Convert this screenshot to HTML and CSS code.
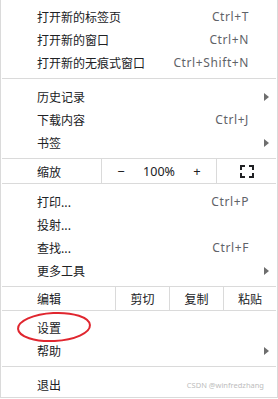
FILE: index.html
```html
<!DOCTYPE html>
<html lang="zh-CN">
<head>
  <meta charset="UTF-8">
  <title>菜单</title>
  <link rel="stylesheet" href="styles.css">
</head>
<body>

<div class="menu">
  <div class="item"><span class="label">打开新的标签页</span><span class="key">Ctrl+T</span></div>
  <div class="item"><span class="label">打开新的窗口</span><span class="key">Ctrl+N</span></div>
  <div class="item"><span class="label">打开新的无痕式窗口</span><span class="key">Ctrl+Shift+N</span></div>

  <div class="sep"></div>

  <div class="item"><span class="label">历史记录</span><span class="arrow"></span></div>
  <div class="item"><span class="label">下载内容</span><span class="key">Ctrl+J</span></div>
  <div class="item"><span class="label">书签</span><span class="arrow"></span></div>

  <div class="zoom">
    <div class="zoom-label">缩放</div>
    <div class="zoom-ctrl">
      <span>−</span>
      <span class="pct">100%</span>
      <span>+</span>
    </div>
    <div class="zoom-full">
      <svg width="14" height="13" viewBox="0 0 14 13">
        <path d="M1 5V1H5 M9 1H13V5 M13 8V12H9 M5 12H1V8" fill="none" stroke="#202124" stroke-width="2"/>
      </svg>
    </div>
  </div>

  <div class="item"><span class="label">打印...</span><span class="key">Ctrl+P</span></div>
  <div class="item"><span class="label">投射...</span></div>
  <div class="item"><span class="label">查找...</span><span class="key">Ctrl+F</span></div>
  <div class="item"><span class="label">更多工具</span><span class="arrow"></span></div>

  <div class="edit">
    <div class="edit-label">编辑</div>
    <div class="edit-btn">剪切</div>
    <div class="edit-btn">复制</div>
    <div class="edit-btn">粘贴</div>
  </div>

  <div class="item"><span class="label">设置</span></div>
  <div class="item"><span class="label">帮助</span><span class="arrow"></span></div>

  <div class="sep"></div>

  <div class="item"><span class="label">退出</span><span class="mark">CSDN @winfredzhang</span></div>

  <svg class="circle" width="78" height="34" viewBox="0 0 78 34">
    <ellipse cx="39" cy="17" rx="36" ry="14" fill="none" stroke="#e0262f" stroke-width="2" transform="rotate(-3 39 17)"/>
  </svg>
</div>

</body>
</html>
```

FILE: styles.css
```css
* {
  box-sizing: border-box;
}

body {
  margin: 0;
  background: #fff;
  font-family: "Noto Sans CJK SC", "Noto Sans", sans-serif;
  font-size: 12px;
  color: #202124;
}

.menu {
  position: relative;
  width: 278px;
  height: 398px;
  padding-top: 5px;
  border: 1px solid #dadada;
  border-top: none;
}

.item {
  display: flex;
  align-items: center;
  height: 23px;
  padding: 0 8px 0 36px;
}

.label {
  flex: 1;
}

.key {
  margin-right: 20px;
  color: #5f6368;
  font-family: "Noto Sans", sans-serif;
  letter-spacing: 0.6px;
}

.arrow {
  width: 0;
  height: 0;
  border-left: 5px solid #6e6e6e;
  border-top: 4px solid transparent;
  border-bottom: 4px solid transparent;
}

.sep {
  height: 1px;
  margin: 4px 1px 6px;
  background: #dadada;
}

.zoom {
  display: flex;
  height: 26px;
  margin: 4px 1px 6px;
  border-top: 1px solid #dadada;
  border-bottom: 1px solid #dadada;
}

.zoom-label {
  width: 100px;
  padding-left: 35px;
  border-right: 1px solid #dadada;
  display: flex;
  align-items: center;
}

.zoom-ctrl {
  width: 115px;
  display: grid;
  grid-template-columns: repeat(3, 1fr);
  align-items: center;
  justify-items: center;
  border-right: 1px solid #dadada;
  font-family: "Noto Sans", sans-serif;
  font-size: 13px;
}

.zoom-ctrl .pct {
  font-size: 12.5px;
}

.zoom-full {
  flex: 1;
  display: flex;
  align-items: center;
  justify-content: center;
}

.edit {
  display: flex;
  height: 25px;
  margin: 4px 1px 5px;
  border-top: 1px solid #dadada;
  border-bottom: 1px solid #dadada;
}

.edit-label {
  width: 114px;
  padding-left: 35px;
  border-right: 1px solid #dadada;
  display: flex;
  align-items: center;
}

.edit-btn {
  width: 54px;
  display: flex;
  align-items: center;
  justify-content: center;
  border-right: 1px solid #dadada;
}

.edit-btn:last-child {
  flex: 1;
  border-right: none;
}

.mark {
  margin-right: 5px;
  font-family: "Noto Sans", sans-serif;
  font-size: 7.5px;
  color: #bdbdbd;
}

.circle {
  position: absolute;
  left: 14px;
  top: 310px;
}
```
